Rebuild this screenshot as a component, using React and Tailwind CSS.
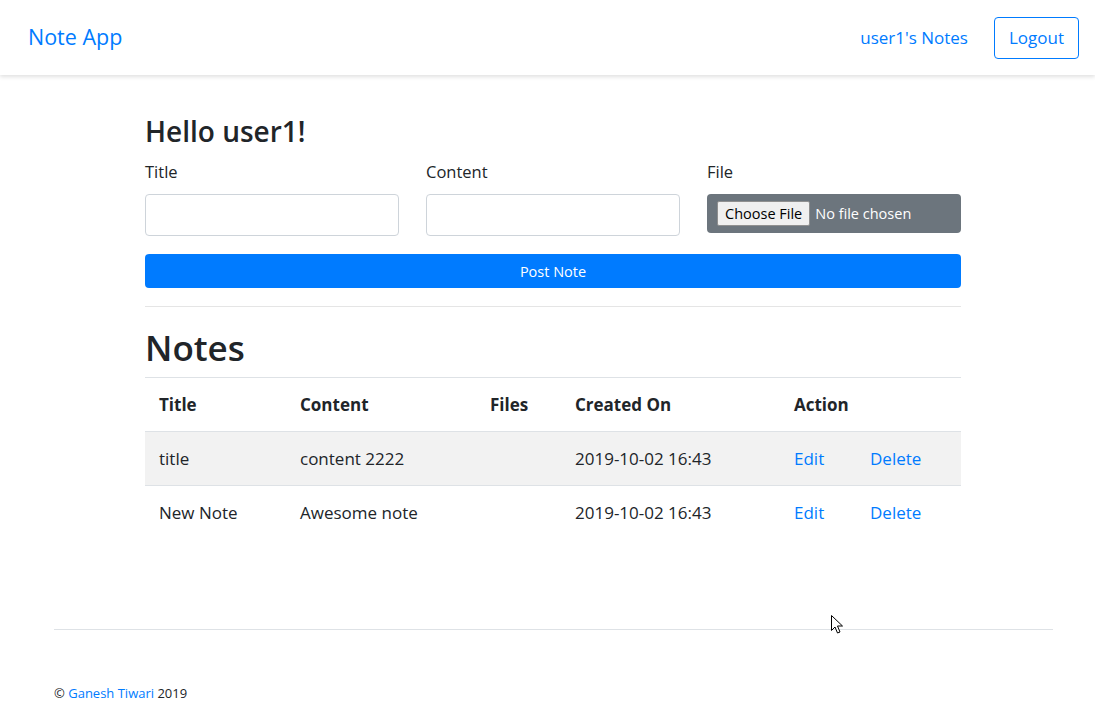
export default function App() {
  const notes = [
    { title: "title", content: "content 2222", files: "", created: "2019-10-02 16:43" },
    { title: "New Note", content: "Awesome note", files: "", created: "2019-10-02 16:43" },
  ];

  return (
    <div className="relative min-h-[727px] bg-white text-[#212529]" style={{ fontFamily: '"Open Sans", "Noto Sans", sans-serif' }}>
      {/* Navbar */}
      <nav className="h-[75px] flex items-center justify-between pl-[28px] pr-[16px] shadow-[0_2px_4px_rgba(0,0,0,0.12)]">
        <a className="text-[21.5px] text-[#007bff]">Note App</a>
        <div className="flex items-center gap-[26px]">
          <a className="text-[#007bff] text-[17px]">user1's Notes</a>
          <button className="h-[42px] px-[14px] border border-[#007bff] rounded-[4px] text-[#007bff] text-[17px]">Logout</button>
        </div>
      </nav>

      {/* Main */}
      <div className="w-[816px] ml-[145px] pt-[36px]">
        <h3 className="text-[28px] font-semibold leading-[40px]">Hello user1!</h3>

        <div className="grid grid-cols-3 gap-[27px] mt-[9px]">
          <div>
            <label className="block text-[16.5px] leading-[24px] mb-[10px]">Title</label>
            <input className="w-full h-[42px] border border-[#ced4da] rounded-[4px]" />
          </div>
          <div>
            <label className="block text-[16.5px] leading-[24px] mb-[10px]">Content</label>
            <input className="w-full h-[42px] border border-[#ced4da] rounded-[4px]" />
          </div>
          <div>
            <label className="block text-[16.5px] leading-[24px] mb-[10px]">File</label>
            <div className="h-[39px] bg-[#6c757d] rounded-[4px] flex items-center pl-[10px]">
              <span className="h-[25px] px-[7px] flex items-center bg-[#efefef] border border-[#8f8f8f] rounded-[2px] text-[14.5px] text-black">Choose File</span>
              <span className="ml-[5px] text-white text-[14.5px]">No file chosen</span>
            </div>
          </div>
        </div>

        <button className="w-full h-[34px] mt-[18px] pt-[1px] bg-[#007bff] rounded-[4px] text-white text-[14.5px]">Post Note</button>

        <hr className="mt-[18px] border-[#e5e5e5]" />

        <h1 className="text-[35px] font-semibold leading-[52px] mt-[15px] mb-[3px]">Notes</h1>

        <table className="w-full border-collapse text-[17px]">
          <thead>
            <tr className="h-[54px] border-t border-[#dee2e6]">
              <th className="w-[141px] text-left font-bold pl-[14px]">Title</th>
              <th className="w-[190px] text-left font-bold pl-[14px]">Content</th>
              <th className="w-[85px] text-left font-bold pl-[14px]">Files</th>
              <th className="w-[219px] text-left font-bold pl-[14px]">Created On</th>
              <th colSpan={2} className="text-left font-bold pl-[14px]">Action</th>
            </tr>
          </thead>
          <tbody>
            {notes.map((n, i) => (
              <tr key={i} className={`h-[54px] border-t border-[#dee2e6] ${i % 2 === 0 ? "bg-[#f2f2f2]" : ""}`}>
                <td className="pl-[14px]">{n.title}</td>
                <td className="pl-[14px]">{n.content}</td>
                <td className="pl-[14px]">{n.files}</td>
                <td className="pl-[14px]">{n.created}</td>
                <td className="w-[76px] pl-[14px] text-[#007bff]">Edit</td>
                <td className="pl-[14px] text-[#007bff]">Delete</td>
              </tr>
            ))}
          </tbody>
        </table>
      </div>

      {/* Footer */}
      <footer className="ml-[54px] mr-[42px] mt-[89px] border-t border-[#dee2e6] pt-[54px]">
        <p className="text-[13px]">© <a className="text-[#007bff]">Ganesh Tiwari</a> 2019</p>
      </footer>

      {/* mouse cursor */}
      <svg className="absolute left-[831px] top-[615px]" width="13" height="20" viewBox="0 0 13 20">
        <path d="M0.5 0.5 L0.5 15.5 L4 12 L6.5 18 L9 17 L6.5 11 L11.5 11 Z" fill="white" stroke="black" strokeWidth="1" />
      </svg>
    </div>
  );
}
